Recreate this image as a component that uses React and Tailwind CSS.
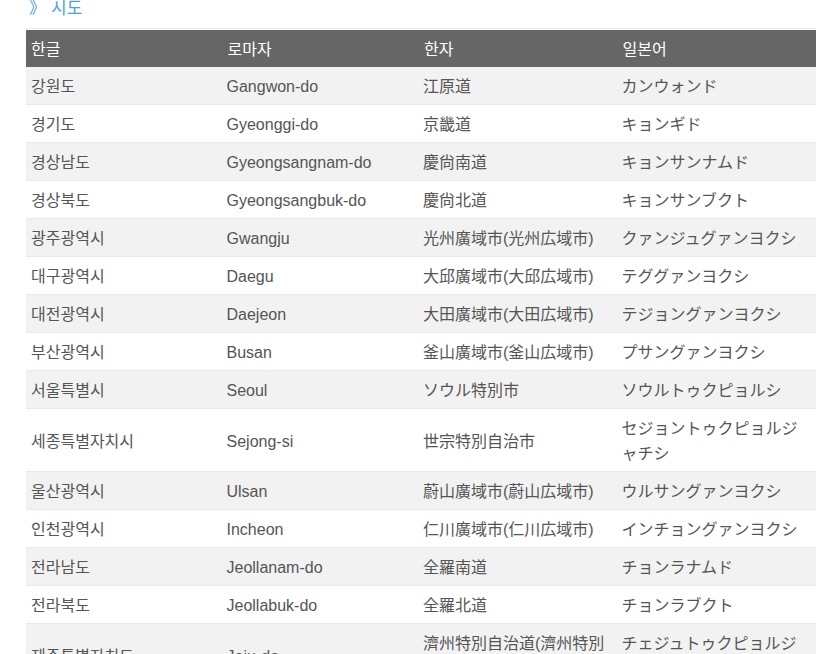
import React from "react";

const rows = [
  ["강원도", "Gangwon-do", "江原道", "カンウォンド"],
  ["경기도", "Gyeonggi-do", "京畿道", "キョンギド"],
  ["경상남도", "Gyeongsangnam-do", "慶尙南道", "キョンサンナムド"],
  ["경상북도", "Gyeongsangbuk-do", "慶尙北道", "キョンサンブクト"],
  ["광주광역시", "Gwangju", "光州廣域市(光州広域市)", "クァンジュグァンヨクシ"],
  ["대구광역시", "Daegu", "大邱廣域市(大邱広域市)", "テググァンヨクシ"],
  ["대전광역시", "Daejeon", "大田廣域市(大田広域市)", "テジョングァンヨクシ"],
  ["부산광역시", "Busan", "釜山廣域市(釜山広域市)", "プサングァンヨクシ"],
  ["서울특별시", "Seoul", "ソウル特別市", "ソウルトゥクピョルシ"],
  ["세종특별자치시", "Sejong-si", "世宗特別自治市", "セジョントゥクピョルジャチシ"],
  ["울산광역시", "Ulsan", "蔚山廣域市(蔚山広域市)", "ウルサングァンヨクシ"],
  ["인천광역시", "Incheon", "仁川廣域市(仁川広域市)", "インチョングァンヨクシ"],
  ["전라남도", "Jeollanam-do", "全羅南道", "チョンラナムド"],
  ["전라북도", "Jeollabuk-do", "全羅北道", "チョンラブクト"],
  ["제주특별자치도", "Jeju-do", "濟州特別自治道(濟州特別自治道)", "チェジュトゥクピョルジャチド"],
];

const kr = { fontFamily: '"Liberation Sans", "Noto Sans CJK KR", sans-serif' };
const jp = { fontFamily: '"Liberation Sans", "Noto Sans CJK JP", sans-serif' };

export default function App() {
  return (
    <div className="w-[840px] h-[654px] overflow-hidden bg-white" style={kr}>
      <div className="h-[28px] pl-[29px] pt-[1px] text-[17px] leading-[16px] text-[#4aa3df]">
        <span style={jp}>》</span>
        <span className="ml-[5px]">시도</span>
      </div>
      <div className="ml-[26px] mr-[24px] border-t border-[#ebebeb] pt-[1px]">
        <table className="w-full table-fixed border-collapse text-[16px] leading-[25px]">
          <thead>
            <tr className="bg-[#666666] text-white">
              <th className="text-left font-normal pl-[5px] pr-[4px] pt-[7px] pb-[5px]">한글</th>
              <th className="text-left font-normal pl-[4px] pr-[4px] pt-[7px] pb-[5px]">로마자</th>
              <th className="text-left font-normal pl-[3px] pr-[4px] pt-[7px] pb-[5px]">한자</th>
              <th className="text-left font-normal pl-[4px] pr-[4px] pt-[7px] pb-[5px]">일본어</th>
            </tr>
          </thead>
          <tbody className="text-[#555555]">
            {rows.map((r, i) => (
              <tr
                key={i}
                className={
                  (i % 2 === 0 ? "bg-[#f2f2f2]" : "bg-white") +
                  " border-b border-[#e9e9e9]"
                }
              >
                <td className="pl-[5px] pr-[4px] pt-[7px] pb-[5px] align-middle">{r[0]}</td>
                <td className="pl-[3px] pr-[4px] pt-[7px] pb-[5px] align-middle">{r[1]}</td>
                <td className="pl-[2px] pr-[4px] pt-[7px] pb-[5px] align-middle" style={jp}>{r[2]}</td>
                <td className="pl-[3px] pr-[5px] pt-[7px] pb-[5px] align-middle" style={jp}>{r[3]}</td>
              </tr>
            ))}
          </tbody>
        </table>
      </div>
    </div>
  );
}
